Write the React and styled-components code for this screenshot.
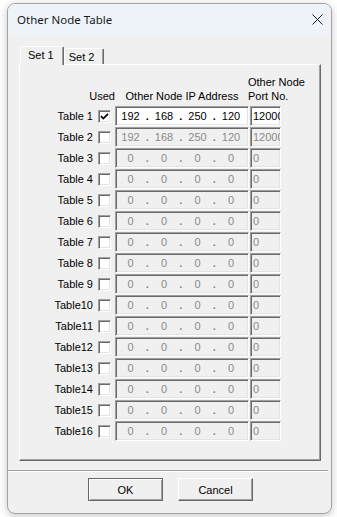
import React, { useState } from 'react'
import styled, { createGlobalStyle } from 'styled-components'

const GlobalStyle = createGlobalStyle`
  html, body {
    margin: 0;
    padding: 0;
    background: #ffffff;
  }
  body {
    font-family: "Liberation Sans", Arial, sans-serif;
  }
`

const initialRows = Array.from({ length: 16 }, (_, i) => ({
  name: i < 9 ? `Table ${i + 1}` : `Table${i + 1}`,
  used: i === 0,
  ip: i < 2 ? ['192', '168', '250', '120'] : ['0', '0', '0', '0'],
  port: i < 2 ? '12000' : '0',
}))

const App = () => {
  const [tab, setTab] = useState(0)
  const [rows, setRows] = useState(initialRows)

  const toggle = (idx) => {
    setRows(rows.map((r, i) => (i === idx ? { ...r, used: !r.used } : r)))
  }

  return (
    <Page>
      <GlobalStyle />
      <Window>
        <TitleBar>
          <Title>Other Node Table</Title>
          <CloseBtn aria-label="close">
            <svg width="11" height="11" viewBox="0 0 11 11">
              <path d="M0.5 0.5 L10.5 10.5 M10.5 0.5 L0.5 10.5" stroke="#1a1a1a" strokeWidth="1" fill="none" />
            </svg>
          </CloseBtn>
        </TitleBar>

        <Body>
          <Tabs>
            <Tab active={tab === 0} onClick={() => setTab(0)}>Set 1</Tab>
            <Tab active={tab === 1} onClick={() => setTab(1)}>Set 2</Tab>
          </Tabs>
          <Panel>
            <HeaderRow>
              <UsedHead>Used</UsedHead>
              <IpHead>Other Node IP Address</IpHead>
              <PortHead>Other Node<br />Port No.</PortHead>
            </HeaderRow>
            {rows.map((r, i) => (
              <Row key={r.name}>
                <Label>{r.name}</Label>
                <Check onClick={() => toggle(i)}>
                  {r.used && (
                    <svg width="9" height="9" viewBox="0 0 9 9">
                      <path d="M1 4.2 L3.3 6.6 L8 1.8" stroke="#000" strokeWidth="1.7" fill="none" />
                    </svg>
                  )}
                </Check>
                <IpBox disabled={!r.used}>
                  {r.ip.map((o, k) => (
                    <React.Fragment key={k}>
                      {k > 0 && <Dot>.</Dot>}
                      <Octet>{o}</Octet>
                    </React.Fragment>
                  ))}
                </IpBox>
                <PortBox disabled={!r.used}>{r.port}</PortBox>
              </Row>
            ))}
          </Panel>
        </Body>

        <Separator />

        <Footer>
          <Button primary>OK</Button>
          <Button>Cancel</Button>
        </Footer>
      </Window>
    </Page>
  )
}

export default App

const Page = styled.div`
  width: 337px;
  height: 517px;
  padding: 3px 5px 3px 7px;
  box-sizing: border-box;
`

const Window = styled.div`
  width: 325px;
  height: 511px;
  box-sizing: border-box;
  border: 1px solid #a3a3a3;
  border-radius: 8px;
  background: #f0f0f0;
  box-shadow: 0 2px 8px rgba(0, 0, 0, 0.22);
  overflow: hidden;
  display: flex;
  flex-direction: column;
`

const TitleBar = styled.div`
  height: 30px;
  background: #eef3fa;
  display: flex;
  align-items: center;
  justify-content: space-between;
  padding: 0 8px 0 9px;
`

const Title = styled.span`
  font-family: "Noto Sans", "Open Sans", sans-serif;
  font-size: 11.5px;
  color: #1a1a1a;
`

const CloseBtn = styled.div`
  width: 11px;
  height: 11px;
  display: flex;
`

const Body = styled.div`
  padding: 11px 0 0 11px;
`

const Tabs = styled.div`
  display: flex;
  align-items: flex-end;
  height: 19px;
  padding-left: 1px;
`

const Tab = styled.div`
  box-sizing: border-box;
  height: ${(p) => (p.active ? '19px' : '16px')};
  padding: ${(p) => (p.active ? '1px 9px 0 7px' : '1px 9px 0 4px')};
  margin-left: ${(p) => (p.active ? '0' : '0')};
  font-size: 11px;
  color: #000;
  background: #f0f0f0;
  border-top: 1px solid #ffffff;
  border-left: 1px solid #ffffff;
  border-right: 1px solid #696969;
  box-shadow: inset -1px 0 0 #a0a0a0;
  border-radius: 2px 2px 0 0;
  position: relative;
  z-index: ${(p) => (p.active ? 2 : 1)};
  margin-bottom: ${(p) => (p.active ? '-1px' : '0')};
  line-height: 15px;
  cursor: default;
`

const Panel = styled.div`
  width: 302px;
  height: 397px;
  box-sizing: border-box;
  border-top: 1px solid #ffffff;
  border-left: 1px solid #ffffff;
  border-right: 1px solid #696969;
  border-bottom: 1px solid #696969;
  box-shadow: inset -1px -1px 0 #a0a0a0;
  padding: 10px 0 0 0;
`

const HeaderRow = styled.div`
  display: flex;
  align-items: flex-end;
  font-size: 11px;
  color: #000;
  line-height: 14px;
  margin-bottom: 3px;
`

const UsedHead = styled.div`
  width: 95px;
  text-align: right;
`

const IpHead = styled.div`
  width: 134px;
  text-align: center;
`

const PortHead = styled.div`
  white-space: nowrap;
  margin-left: -1px;
`

const Row = styled.div`
  display: flex;
  align-items: center;
  height: 20px;
  margin-bottom: 1px;
`

const Label = styled.div`
  width: 73px;
  text-align: right;
  font-size: 11px;
  color: #000;
`

const Check = styled.div`
  width: 13px;
  height: 13px;
  box-sizing: border-box;
  margin-left: 5px;
  background: #ffffff;
  border: 1px solid;
  border-color: #a0a0a0 #ffffff #ffffff #a0a0a0;
  box-shadow: inset 1px 1px 0 #696969, inset -1px -1px 0 #e3e3e3;
  display: flex;
  align-items: center;
  justify-content: center;
`

const sunken = `
  box-sizing: border-box;
  height: 20px;
  border: 1px solid;
  border-color: #a0a0a0 #ffffff #ffffff #a0a0a0;
  box-shadow: inset 1px 1px 0 #696969, inset -1px -1px 0 #e3e3e3;
  font-size: 11px;
  overflow: hidden;
  white-space: nowrap;
`

const IpBox = styled.div`
  ${sunken}
  width: 134px;
  margin-left: 4px;
  padding: 0 0 0 1px;
  display: flex;
  align-items: center;
  background: ${(p) => (p.disabled ? '#f0f0f0' : '#ffffff')};
  color: ${(p) => (p.disabled ? '#8a8a8a' : '#000000')};
`

const Octet = styled.span`
  width: 27px;
  text-align: center;
  font-size: 11px;
`

const Dot = styled.span`
  width: 6.5px;
  text-align: center;
  font-weight: bold;
  font-size: 11px;
`

const PortBox = styled.div`
  ${sunken}
  width: 31px;
  margin-left: 1px;
  padding: 2px 0 0 2px;
  line-height: 14px;
  background: ${(p) => (p.disabled ? '#f0f0f0' : '#ffffff')};
  color: ${(p) => (p.disabled ? '#8a8a8a' : '#000000')};
`

const Separator = styled.div`
  margin: 9px 3px 0 0;
  height: 1px;
  background: #a0a0a0;
  border-bottom: 1px solid #ffffff;
`

const Footer = styled.div`
  display: flex;
  justify-content: center;
  gap: 15px;
  margin-top: 6px;
  padding-left: 2px;
`

const Button = styled.div`
  width: 75px;
  height: 23px;
  box-sizing: border-box;
  font-size: 11px;
  color: #000;
  display: flex;
  align-items: center;
  justify-content: center;
  background: #f0f0f0;
  border: 1px solid;
  border-color: ${(p) => (p.primary ? '#696969' : '#ffffff #696969 #696969 #ffffff')};
  box-shadow: ${(p) =>
    p.primary
      ? 'inset 1px 1px 0 #ffffff, inset -1px -1px 0 #a0a0a0'
      : 'inset -1px -1px 0 #a0a0a0'};
  cursor: default;
`
